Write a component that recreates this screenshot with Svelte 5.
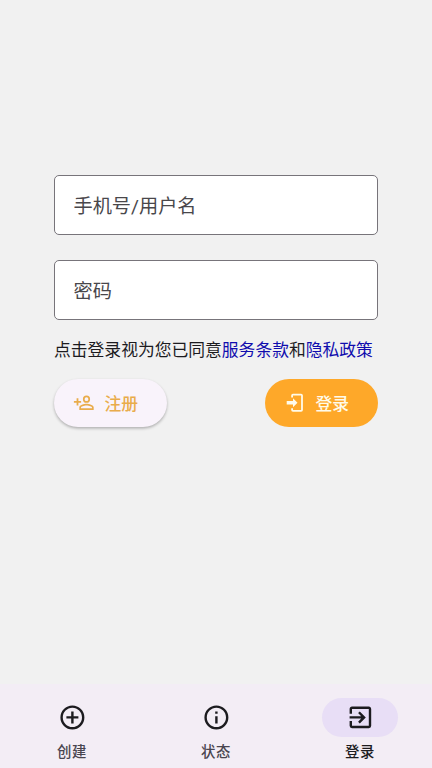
<script>
	let username = '';
	let password = '';
	let active = 'login';

	const tabs = [
		{
			id: 'create',
			label: '创建',
			icon: 'M12 20c-4.41 0-8-3.59-8-8s3.59-8 8-8 8 3.59 8 8-3.59 8-8 8m0-18A10 10 0 0 0 2 12a10 10 0 0 0 10 10 10 10 0 0 0 10-10A10 10 0 0 0 12 2m1 5h-2v4H7v2h4v4h2v-4h4v-2h-4V7z'
		},
		{
			id: 'status',
			label: '状态',
			icon: 'M11 9h2V7h-2m1 13c-4.41 0-8-3.59-8-8s3.59-8 8-8 8 3.59 8 8-3.59 8-8 8m0-18A10 10 0 0 0 2 12a10 10 0 0 0 10 10 10 10 0 0 0 10-10A10 10 0 0 0 12 2m-1 15h2v-6h-2v6z'
		},
		{
			id: 'login',
			label: '登录',
			icon: 'M19 3H5c-1.11 0-2 .89-2 2v4h2V5h14v14H5v-4H3v4a2 2 0 0 0 2 2h14a2 2 0 0 0 2-2V5c0-1.11-.9-2-2-2m-8.92 12.58L11.5 17l5-5-5-5-1.42 1.41L12.67 11H3v2h9.67l-2.59 2.58z'
		}
	];
</script>

<div class="screen">
	<main>
		<form on:submit|preventDefault>
			<input type="text" placeholder="手机号/用户名" bind:value={username} />
			<input type="password" placeholder="密码" bind:value={password} />

			<p class="terms">
				点击登录视为您已同意<a href="#terms">服务条款</a>和<a href="#privacy">隐私政策</a>
			</p>

			<div class="actions">
				<button type="button" class="btn register">
					<svg viewBox="0 0 24 24">
						<path
							d="M15 4a4 4 0 0 0-4 4 4 4 0 0 0 4 4 4 4 0 0 0 4-4 4 4 0 0 0-4-4m0 1.9a2.1 2.1 0 1 1 0 4.2A2.1 2.1 0 0 1 12.9 8 2.1 2.1 0 0 1 15 5.9M4 7v3H1v2h3v3h2v-3h3v-2H6V7H4m11 6c-2.67 0-8 1.33-8 4v3h16v-3c0-2.67-5.33-4-8-4m0 1.9c2.97 0 6.1 1.46 6.1 2.1v1.1H8.9V17c0-.64 3.1-2.1 6.1-2.1z"
						/>
					</svg>
					注册
				</button>
				<button type="submit" class="btn login">
					<svg viewBox="0 0 24 24">
						<path
							d="M10 17v-3H3v-4h7V7l5 5-5 5m0-15h9a2 2 0 0 1 2 2v16a2 2 0 0 1-2 2h-9a2 2 0 0 1-2-2v-2h2v2h9V4h-9v2H8V4a2 2 0 0 1 2-2z"
						/>
					</svg>
					登录
				</button>
			</div>
		</form>
	</main>

	<nav>
		{#each tabs as tab}
			<button class="tab" class:active={active === tab.id} on:click={() => (active = tab.id)}>
				<span class="pill">
					<svg viewBox="0 0 24 24"><path d={tab.icon} /></svg>
				</span>
				<span class="label">{tab.label}</span>
			</button>
		{/each}
	</nav>
</div>

<style>
	.screen {
		display: flex;
		flex-direction: column;
		height: 100vh;
		background: #f1f1f1;
		font-family: Roboto, 'Noto Sans CJK SC', sans-serif;
		color: #1c1b1f;
	}

	main {
		flex: 1;
		padding: 175px 54px 0;
	}

	input {
		display: block;
		box-sizing: border-box;
		width: 100%;
		height: 60px;
		margin: 0 0 25px;
		padding: 3px 18px 0 18.5px;
		border: 1px solid #77747a;
		border-radius: 5px;
		background: white;
		font: inherit;
		font-size: 19.2px;
		color: #1c1b1f;
		outline: none;
	}

	input::placeholder {
		color: #49474b;
		opacity: 1;
	}

	.terms {
		margin: -8px 0 16px;
		font-size: 16.8px;
		line-height: 27px;
		height: 26px;
		white-space: nowrap;
	}

	a {
		color: #100cae;
		text-decoration: none;
	}

	.actions {
		display: flex;
		justify-content: space-between;
	}

	button {
		border: none;
		font: inherit;
		cursor: pointer;
	}

	svg {
		display: block;
		fill: currentColor;
	}

	.btn {
		display: flex;
		align-items: center;
		gap: 9.6px;
		height: 48px;
		padding: 0 28.8px 0 19.2px;
		border-radius: 24px;
		font-size: 16.8px;
		font-weight: 500;
		letter-spacing: 0.12px;
	}

	.btn svg {
		width: 21.6px;
		height: 21.6px;
	}

	.register {
		background: #f9f3fb;
		color: #e9ac4b;
		box-shadow: 0 1.5px 3px rgba(0, 0, 0, 0.28);
	}

	.login {
		background: #fea829;
		color: #fffbea;
	}

	nav {
		display: flex;
		box-sizing: border-box;
		height: 84px;
		padding-top: 14px;
		background: #f3edf5;
	}

	.tab {
		flex: 1;
		display: flex;
		flex-direction: column;
		align-items: center;
		gap: 6px;
		padding: 0;
		background: none;
		color: #1c1b1f;
	}

	.pill {
		display: flex;
		align-items: center;
		justify-content: center;
		width: 76.8px;
		height: 39px;
		border-radius: 20px;
	}

	.pill svg {
		width: 28.8px;
		height: 28.8px;
	}

	.label {
		font-size: 14.4px;
		font-weight: 500;
		line-height: 19px;
		letter-spacing: 0.6px;
		color: #49454f;
	}

	.active .pill {
		background: #e8def6;
	}

	.active .label {
		color: #1c1b1f;
	}
</style>
